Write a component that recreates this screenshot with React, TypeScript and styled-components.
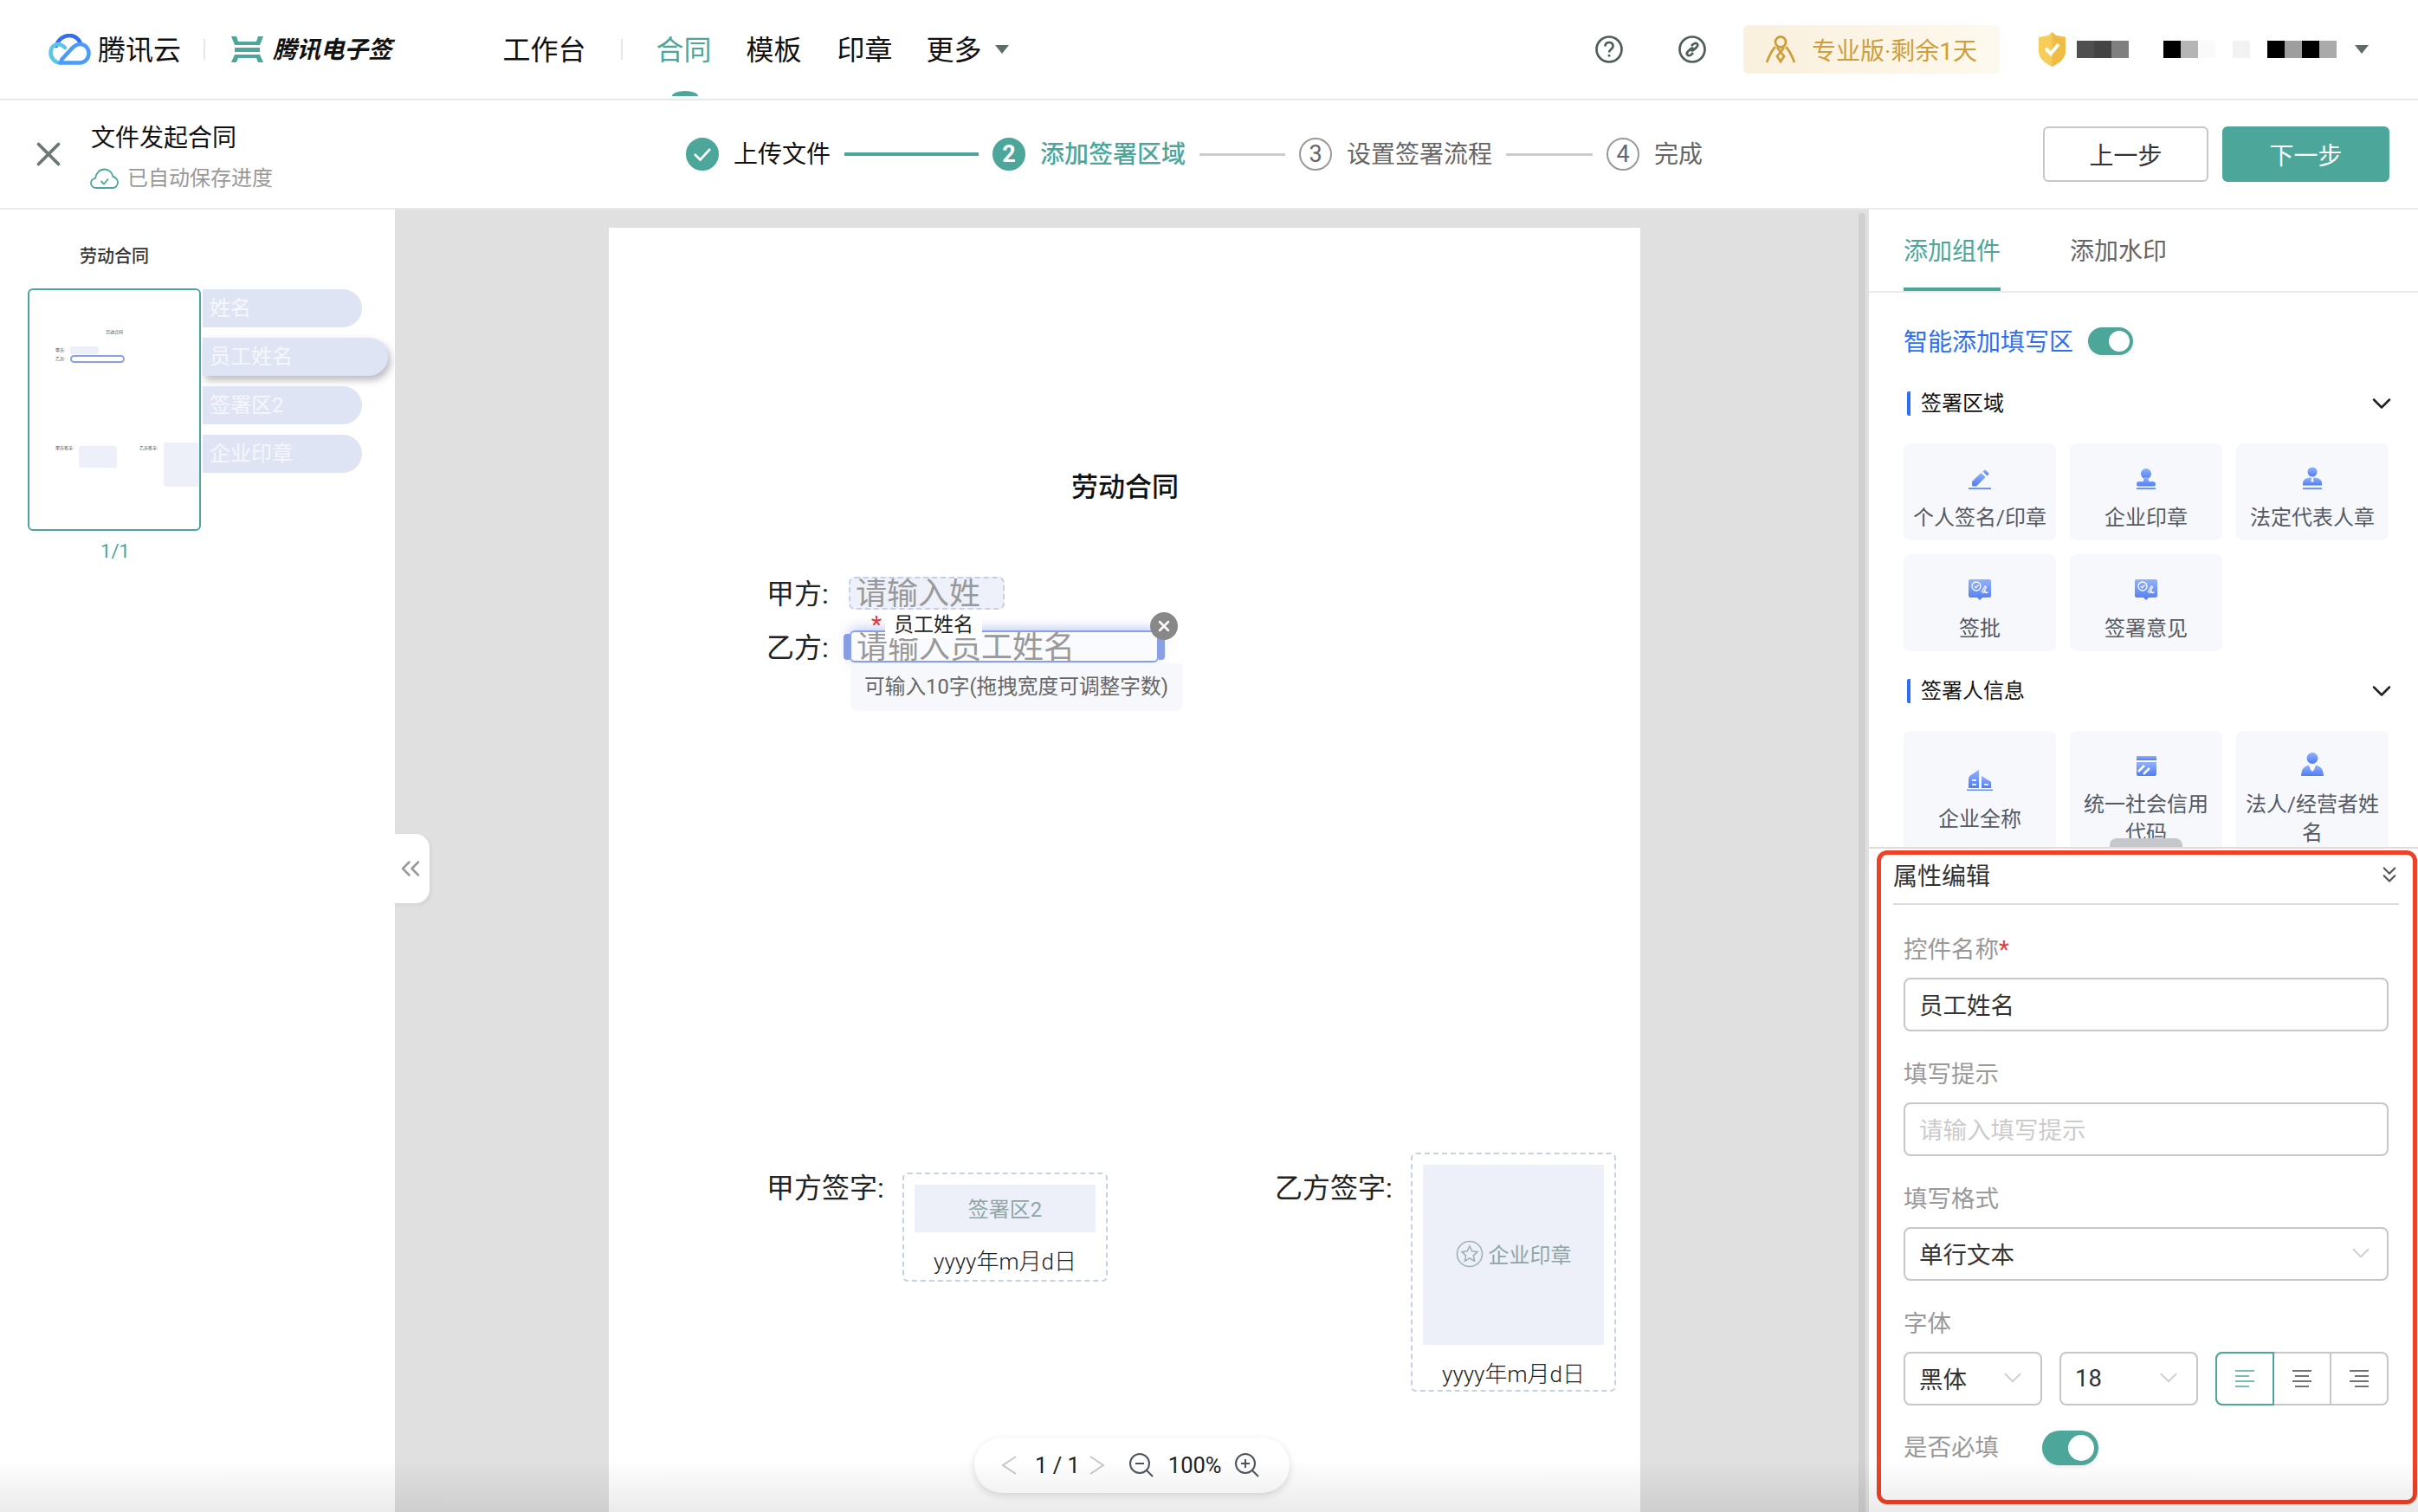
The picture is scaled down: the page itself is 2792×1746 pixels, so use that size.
import { useId } from "react";
import type { ReactNode } from "react";
import styled, { createGlobalStyle } from "styled-components";
import { ChevronDown, ChevronsDown, ChevronsLeft, X } from "lucide-react";

const FONT = `Roboto, "Noto Sans CJK SC", sans-serif`;
const TEAL = "#4ca69a";

const GlobalStyle = createGlobalStyle`
  html, body {
    margin: 0;
    padding: 0;
    overflow: hidden;
    background: #fff;
  }
  * {
    box-sizing: border-box;
  }
`;

const Page = styled.div`
  position: relative;
  width: 100vw;
  height: 100vh;
  display: flex;
  flex-direction: column;
  overflow: hidden;
  font-family: ${FONT};
  color: #222;
`;

const BottomFade = styled.div`
  position: absolute;
  left: 0;
  right: 0;
  bottom: 0;
  height: 62px;
  background: linear-gradient(to bottom, rgba(0, 0, 0, 0), rgba(0, 0, 0, 0.08));
  pointer-events: none;
  z-index: 20;
`;

/* top bar */
const TopBar = styled.header`
  flex: none;
  height: 116px;
  display: flex;
  align-items: center;
  padding: 0 57px 0 56px;
  border-bottom: 2px solid #e6eaea;
`;

const Brand = styled.span`
  margin-left: 8px;
  padding-top: 2px;
  font-size: 32px;
  line-height: 44px;
  color: #111;
`;

const BrandSub = styled.span`
  margin-left: 11px;
  padding-top: 2px;
  font-size: 27.5px;
  line-height: 44px;
  font-weight: 700;
  font-style: italic;
  color: #111;
`;

const VSep = styled.i<{ $left: number; $right: number }>`
  width: 2px;
  height: 24px;
  background: #e6e6e6;
  margin: 0 ${(p) => p.$right}px 0 ${(p) => p.$left}px;
`;

const Nav = styled.nav`
  display: flex;
  align-items: center;
  margin-left: 128px;
`;

const NavItem = styled.a<{ $active?: boolean; $gap?: number }>`
  position: relative;
  margin-left: ${(p) => p.$gap ?? 0}px;
  padding-top: 2px;
  font-size: 32px;
  line-height: 44px;
  color: ${(p) => (p.$active ? TEAL : "#111")};

  ${(p) =>
    p.$active &&
    `&::after {
      content: "";
      position: absolute;
      left: 18px;
      top: 71px;
      width: 30px;
      height: 6px;
      background: ${TEAL};
      border-radius: 50% 50% 0 0 / 100% 100% 0 0;
    }`}
`;

const Caret = styled.i<{ $left: number }>`
  width: 0;
  height: 0;
  margin-left: ${(p) => p.$left}px;
  border-left: 8px solid transparent;
  border-right: 8px solid transparent;
  border-top: 10px solid #5f6b68;
`;

const TopRight = styled.div`
  margin-left: auto;
  display: flex;
  align-items: center;
`;

const RoundIcon = styled.svg<{ $gap: number }>`
  width: 32px;
  height: 32px;
  margin-right: ${(p) => p.$gap}px;
  fill: none;
  stroke: #4e5e59;
  stroke-width: 2.7;
`;

const PlanBadge = styled.div`
  width: 296px;
  height: 56px;
  display: flex;
  align-items: center;
  gap: 18px;
  padding-left: 25px;
  border-radius: 6px;
  background: linear-gradient(to right, #f9f0dd, #fef9ee);
  color: #cf9e38;
  font-size: 28px;
  white-space: nowrap;
`;

const MaskRow = styled.div`
  display: flex;
  margin-left: 13px;
`;

const MaskTile = styled.i<{ $color: string }>`
  width: 20px;
  height: 20px;
  background: ${(p) => p.$color};
`;

/* step bar */
const StepBar = styled.div`
  flex: none;
  height: 126px;
  display: grid;
  grid-template-columns: 747px auto 1fr;
  align-items: center;
  padding: 0 33px 0 45px;
  border-bottom: 2px solid #e6eaea;
`;

const TitleBlock = styled.div`
  display: flex;
  align-items: center;
  gap: 26px;

  > svg {
    margin-left: -12px;
  }
`;

const TitleText = styled.div`
  padding-top: 7px;
`;

const DocTitle = styled.div`
  font-size: 28px;
  line-height: 40px;
  color: #111;
`;

const AutoSave = styled.div`
  display: flex;
  align-items: center;
  gap: 10px;
  margin-top: 9px;
  font-size: 24px;
  line-height: 34px;
  color: #999;
`;

const Stepper = styled.div`
  display: flex;
  align-items: center;
`;

const StepDot = styled.span<{ $on?: boolean }>`
  width: 38px;
  height: 38px;
  display: flex;
  align-items: center;
  justify-content: center;
  border-radius: 50%;
  font-size: 27px;
  font-weight: ${(p) => (p.$on ? 700 : 400)};
  color: ${(p) => (p.$on ? "#fff" : "#666")};
  background: ${(p) => (p.$on ? TEAL : "#fff")};
  border: 2px solid ${(p) => (p.$on ? TEAL : "#999")};
`;

const StepLabel = styled.span<{ $tone: "done" | "active" | "todo" }>`
  margin-left: 17px;
  padding-top: 2px;
  font-size: 28px;
  line-height: 40px;
  white-space: nowrap;
  font-weight: ${(p) => (p.$tone === "active" ? 500 : 400)};
  color: ${(p) => (p.$tone === "active" ? TEAL : p.$tone === "done" ? "#111" : "#666")};
`;

const StepLine = styled.i<{ $on?: boolean; $width: number }>`
  width: ${(p) => p.$width}px;
  height: ${(p) => (p.$on ? 4 : 3)}px;
  margin: 0 16px;
  background: ${(p) => (p.$on ? TEAL : "#ccc")};
`;

const StepActions = styled.div`
  justify-self: end;
  display: flex;
  gap: 16px;
`;

const StepButton = styled.button<{ $primary?: boolean }>`
  width: ${(p) => (p.$primary ? 193 : 191)}px;
  height: 64px;
  border-radius: 6px;
  font-family: ${FONT};
  font-size: 28px;
  color: ${(p) => (p.$primary ? "#fff" : "#333")};
  background: ${(p) => (p.$primary ? TEAL : "#fff")};
  border: 2px solid ${(p) => (p.$primary ? TEAL : "#c5c8c8")};
`;

/* body */
const Body = styled.div`
  flex: 1;
  min-height: 0;
  display: flex;
`;

const LeftPanel = styled.aside`
  flex: none;
  width: 456px;
  padding: 40px 0 0 32px;
  background: #fff;
`;

const ThumbHeading = styled.div`
  width: 200px;
  margin-bottom: 23px;
  text-align: center;
  font-size: 20px;
  line-height: 28px;
  font-weight: 500;
  color: #333;
`;

const ThumbRow = styled.div`
  display: flex;
  gap: 2px;
`;

const Thumb = styled.div`
  position: relative;
  width: 200px;
  height: 280px;
  border: 2px solid ${TEAL};
  border-radius: 6px;
  overflow: hidden;
`;

const ThumbText = styled.span<{ $x: number; $y: number }>`
  position: absolute;
  left: ${(p) => p.$x}px;
  top: ${(p) => p.$y}px;
  font-size: 5px;
  line-height: 7px;
  color: #444;
  white-space: nowrap;
`;

const ThumbBox = styled.i<{ $x: number; $y: number; $w: number; $h: number; $on?: boolean }>`
  position: absolute;
  left: ${(p) => p.$x}px;
  top: ${(p) => p.$y}px;
  width: ${(p) => p.$w}px;
  height: ${(p) => p.$h}px;
  border-radius: ${(p) => (p.$on ? 5 : 2)}px;
  background: ${(p) => (p.$on ? "#fff" : "#edf0f9")};
  border: ${(p) => (p.$on ? "2px solid #8aa0e4" : "none")};
`;

const TagList = styled.div`
  display: flex;
  flex-direction: column;
  gap: 12px;
  padding-top: 1px;
`;

const Tag = styled.div<{ $active?: boolean }>`
  width: ${(p) => (p.$active ? 214 : 184)}px;
  height: 44px;
  padding-left: 8px;
  border-radius: 0 22px 22px 0;
  background: #dfe4f4;
  color: #f6f7fc;
  font-size: 24px;
  line-height: 44px;
  box-shadow: ${(p) => (p.$active ? "3px 5px 8px rgba(60, 60, 80, 0.35)" : "none")};
`;

const PageNo = styled.div`
  width: 202px;
  margin-top: 11px;
  text-align: center;
  font-size: 22px;
  line-height: 26px;
  color: ${TEAL};
`;

const Canvas = styled.main`
  position: relative;
  flex: 1;
  min-width: 0;
  padding: 21px 0 0 247px;
  background: #e0e0e0;
`;

const CollapseTab = styled.div`
  position: absolute;
  left: -4px;
  top: 721px;
  width: 44px;
  height: 80px;
  display: flex;
  align-items: center;
  justify-content: center;
  border-radius: 0 16px 16px 0;
  background: #fff;
  color: #999;
  box-shadow: 2px 2px 4px rgba(0, 0, 0, 0.06);
`;

const ScrollThumb = styled.i`
  position: absolute;
  left: 1690px;
  top: 4px;
  bottom: 0;
  width: 8px;
  border-radius: 4px 4px 0 0;
  background: #d0d0d0;
`;

const Sheet = styled.div`
  position: relative;
  width: 1191px;
  height: 100%;
  background: #fff;
  overflow: hidden;
`;

const SheetTitle = styled.div`
  position: absolute;
  left: 534px;
  top: 277px;
  font-size: 31px;
  line-height: 46px;
  font-weight: 500;
  color: #111;
`;

const SheetLabel = styled.div<{ $x: number; $y: number }>`
  position: absolute;
  left: ${(p) => p.$x}px;
  top: ${(p) => p.$y}px;
  font-size: 32px;
  line-height: 44px;
  color: #222;
  white-space: nowrap;
`;

const DashedField = styled.div`
  position: absolute;
  left: 277px;
  top: 403px;
  width: 180px;
  height: 38px;
  padding-left: 6px;
  border: 2px dashed #c6cfe6;
  border-radius: 7px;
  background: #eef1f9;
  color: #999;
  font-size: 36px;
  line-height: 36px;
  overflow: hidden;
  white-space: nowrap;
`;

const ActiveField = styled.div`
  position: absolute;
  left: 278px;
  top: 465px;
  width: 357px;
  height: 37px;

  &::before,
  &::after {
    content: "";
    position: absolute;
    top: 4px;
    width: 7px;
    height: 30px;
    background: #8aa0e4;
  }
  &::before {
    left: -7px;
    border-radius: 4px 0 0 4px;
  }
  &::after {
    right: -7px;
    border-radius: 0 0 4px 0;
  }
`;

const ActiveInput = styled.div`
  position: relative;
  width: 100%;
  height: 100%;
  padding-left: 6px;
  border: 2px solid #8aa0e4;
  border-radius: 6px;
  background: #fafbfe;
  box-shadow: 0 -2px 14px rgba(120, 145, 225, 0.5);
  color: #999;
  font-size: 36px;
  line-height: 37px;
  overflow: hidden;
  white-space: nowrap;
`;

const FieldStar = styled.span`
  position: absolute;
  left: 25px;
  top: -20px;
  color: #e0393e;
  font-size: 28px;
  line-height: 28px;
`;

const FieldName = styled.span`
  position: absolute;
  left: 41px;
  top: -21px;
  width: 112px;
  height: 30px;
  padding-left: 10px;
  background: #fff;
  color: #222;
  font-size: 23px;
  line-height: 30px;
  white-space: nowrap;
`;

const FieldClose = styled.span`
  position: absolute;
  left: 347px;
  top: -21px;
  width: 32px;
  height: 32px;
  display: flex;
  align-items: center;
  justify-content: center;
  border-radius: 50%;
  background: #888;
  color: #fff;
  z-index: 2;
`;

const FieldHint = styled.div`
  position: absolute;
  left: 1px;
  top: 38px;
  width: 384px;
  height: 55px;
  padding-left: 16px;
  border-radius: 0 0 8px 8px;
  background: #f7f8fb;
  color: #666;
  font-size: 23.7px;
  line-height: 55px;
  white-space: nowrap;
`;

const SignBox = styled.div<{ $x: number; $y: number; $h: number }>`
  position: absolute;
  left: ${(p) => p.$x}px;
  top: ${(p) => p.$y}px;
  width: 237px;
  height: ${(p) => p.$h}px;
  padding: 12px 12px 0;
  border: 2px dashed #c6d2e4;
  border-radius: 6px;
  text-align: center;
`;

const SignArea = styled.div<{ $h: number }>`
  height: ${(p) => p.$h}px;
  display: flex;
  align-items: center;
  justify-content: center;
  gap: 6px;
  padding-bottom: 3px;
  background: #edf0f9;
  color: #8fa5a5;
  font-size: 24px;
`;

const SignDate = styled.div`
  margin-top: 17px;
  font-size: 26px;
  font-weight: 300;
  line-height: 34px;
  color: #222;
`;

const Pager = styled.div`
  position: absolute;
  left: 669px;
  bottom: 22px;
  width: 364px;
  height: 64px;
  display: flex;
  align-items: center;
  padding-left: 31px;
  border-radius: 32px;
  background: #fff;
  box-shadow: 0 3px 10px rgba(0, 0, 0, 0.14);
  font-size: 25.5px;
  color: #222;
  white-space: nowrap;
`;

const PagerCount = styled.span`
  margin: 0 10px 0 20px;
`;

const PagerZoom = styled.span`
  margin: 0 14px 0 16px;
`;

const PagerArrow = styled.svg`
  width: 19px;
  height: 22px;
  fill: none;
  stroke: #c8c8c8;
  stroke-width: 2;
`;

const PagerIcon = styled.svg<{ $left?: number }>`
  width: 30px;
  height: 30px;
  margin-left: ${(p) => p.$left ?? 0}px;
  fill: none;
  stroke: #4c5560;
  stroke-width: 2;
`;

/* right panel */
const RightPanel = styled.aside`
  flex: none;
  width: 634px;
  display: flex;
  flex-direction: column;
  background: #fff;
`;

const Widgets = styled.div`
  position: relative;
  flex: none;
  height: 738px;
  border-bottom: 2px solid #dddddd;
  overflow: hidden;
`;

const DragHandle = styled.i`
  position: absolute;
  left: 278px;
  bottom: 0;
  width: 84px;
  height: 10px;
  border-radius: 8px 8px 0 0;
  background: #c5c7cd;
`;

const Tabs = styled.div`
  height: 96px;
  display: flex;
  gap: 80px;
  padding-left: 40px;
  border-bottom: 2px solid #e6eaea;
`;

const TabItem = styled.div<{ $active?: boolean }>`
  height: 94px;
  font-size: 28px;
  line-height: 98px;
  color: ${(p) => (p.$active ? TEAL : "#666")};
  border-bottom: 4px solid ${(p) => (p.$active ? TEAL : "transparent")};
  white-space: nowrap;
`;

const WidgetBody = styled.div`
  padding: 40px 34px 0 40px;
`;

const SmartRow = styled.div`
  height: 32px;
  display: flex;
  align-items: center;
  gap: 17px;
  font-size: 28px;
  color: #2c6ef5;
`;

const SmartText = styled.span`
  margin-top: -2px;
`;

const Toggle = styled.span<{ $large?: boolean }>`
  position: relative;
  display: block;
  flex: none;
  width: ${(p) => (p.$large ? 65 : 52)}px;
  height: ${(p) => (p.$large ? 40 : 32)}px;
  border-radius: 20px;
  background: ${TEAL};
  box-shadow: 0 2px 5px rgba(0, 0, 0, 0.08);

  &::after {
    content: "";
    position: absolute;
    right: ${(p) => (p.$large ? 5 : 4)}px;
    top: ${(p) => (p.$large ? 5 : 4)}px;
    width: ${(p) => (p.$large ? 30 : 24)}px;
    height: ${(p) => (p.$large ? 30 : 24)}px;
    border-radius: 50%;
    background: #fff;
  }
`;

const SectionHead = styled.div<{ $first?: boolean }>`
  height: 28px;
  margin-top: ${(p) => (p.$first ? 42 : 32)}px;
  display: flex;
  align-items: center;
  justify-content: space-between;
  padding-left: 4px;
  font-size: 24px;
  color: #111;

  svg {
    margin-right: -10px;
  }
`;

const SectionName = styled.span`
  padding-left: 12px;
  line-height: 28px;
  border-left: 4px solid #2c6ef5;
  border-radius: 2px;
`;

const WidgetGrid = styled.div<{ $tall?: boolean }>`
  margin-top: 32px;
  display: grid;
  grid-template-columns: repeat(3, 176px);
  grid-auto-rows: ${(p) => (p.$tall ? 160 : 112)}px;
  gap: 16px;
`;

const WidgetCard = styled.div<{ $tall?: boolean }>`
  display: flex;
  flex-direction: column;
  align-items: center;
  justify-content: center;
  padding: ${(p) => (p.$tall ? "0 8px 9px" : "7px 8px 0")};
  border-radius: 8px;
  background: #f7f8fc;
  color: #555a63;
  font-size: 24px;
  line-height: 33px;
  text-align: center;
`;

const WidgetIconSlot = styled.div`
  height: 36px;
  margin-bottom: 17px;
  display: flex;
  align-items: flex-end;
  justify-content: center;
`;

const Editor = styled.section`
  position: relative;
  flex: 1;
  min-height: 0;
`;

const RedFrame = styled.div`
  position: absolute;
  left: 9px;
  top: 2px;
  right: 1px;
  bottom: 9px;
  border: 5.5px solid #ef4128;
  border-radius: 12px;
  pointer-events: none;
  z-index: 5;
`;

const EditorHead = styled.div`
  height: 65px;
  margin: 0 22px 0 28px;
  padding: 0 0 3px;
  display: flex;
  align-items: center;
  justify-content: space-between;
  border-bottom: 2px solid #ddd;
  font-size: 28px;
  color: #333;

  svg {
    margin-right: -4px;
  }
`;

const EditorForm = styled.div`
  display: flex;
  flex-direction: column;
  gap: 32px;
  padding: 34px 34px 0 40px;
`;

const FieldLabel = styled.div`
  margin-bottom: 14px;
  font-size: 27.5px;
  line-height: 36px;
  color: #999;

  em {
    color: #e0393e;
    font-style: normal;
  }
`;

const TextBox = styled.div<{ $placeholder?: boolean }>`
  height: 62px;
  display: flex;
  align-items: center;
  justify-content: space-between;
  padding: 0 13px 2px 16px;
  border: 2px solid #c5c8c8;
  border-radius: 8px;
  font-size: 27.5px;
  color: ${(p) => (p.$placeholder ? "#ccc" : "#333")};
  background: #fff;
`;

const FontRow = styled.div`
  display: flex;
  align-items: stretch;
  gap: 20px;
`;

const SmallSelect = styled(TextBox)`
  width: 160px;
  padding-right: 15px;
`;

const AlignGroup = styled.div`
  width: 200px;
  height: 62px;
  display: flex;
  border: 2px solid #c5c8c8;
  border-radius: 8px;
`;

const AlignButton = styled.div<{ $on?: boolean }>`
  flex: 1;
  display: flex;
  align-items: center;
  justify-content: center;
  margin: ${(p) => (p.$on ? "-2px 0 -2px -2px" : "0")};
  border: ${(p) => (p.$on ? `2px solid ${TEAL}` : "none")};
  border-radius: ${(p) => (p.$on ? "8px 0 0 8px" : "0")};
  border-left: ${(p) => (p.$on ? `2px solid ${TEAL}` : "2px solid #c5c8c8")};
  color: ${(p) => (p.$on ? TEAL : "#444")};

  &:nth-child(2) {
    border-left: none;
  }
`;

const RequiredRow = styled.div`
  display: flex;
  align-items: center;
  height: 40px;
  margin-top: -3px;
`;

const RequiredLabel = styled(FieldLabel)`
  width: 160px;
  margin-bottom: 0;
`;

const SelectChevron = () => <ChevronDown size={34} color="#d0d0d0" strokeWidth={1.4} />;

const BlueIcon = ({ w, h, children }: { w: number; h: number; children: ReactNode }) => {
  const id = useId();
  return (
    <svg width={w} height={h} viewBox={`0 0 ${w} ${h}`} style={{ fill: `url(#${id})` }}>
      <defs>
        <linearGradient id={id} x1="0" y1="0" x2="0" y2="1">
          <stop offset="0" stopColor="#93b2fb" />
          <stop offset="1" stopColor="#4f7cf4" />
        </linearGradient>
      </defs>
      {children}
    </svg>
  );
};

const PenIcon = () => (
  <BlueIcon w={26} h={24}>
    <path d="M4 15 14.5 5l5 5L9 20.5H5.5Q4 20.5 4 19Z" />
    <path d="M16.5 3.5 18 2q1-1 2 0l3 3q1 1 0 2l-1.5 1.5Z" />
    <rect x="0" y="22" width="26" height="2" />
  </BlueIcon>
);

const StampIcon = () => (
  <BlueIcon w={22} h={24}>
    <circle cx="11" cy="6" r="6" />
    <path d="M8.5 10h5l.5 5h5q3 0 3 3 0 2.600-3 2.600H3Q0 20.600 0 18q0-3 3-3h5Z" />
    <rect x="0" y="22" width="22" height="2" />
  </BlueIcon>
);

const LegalIcon = () => (
  <BlueIcon w={22} h={26}>
    <circle cx="11" cy="6" r="5.500" />
    <path d="M8 12.500h2l-.5 5h3L12 12.500h2q8 .5 8 7v2H0v-2q0-6.500 8-7Z" />
    <rect x="0" y="24" width="22" height="2" />
  </BlueIcon>
);

const ApproveIcon = () => (
  <BlueIcon w={26} h={24}>
    <path d="M2 0h22q2 0 2 2v17q0 2-2 2h-8l-3 3-3-3H2q-2 0-2-2V2q0-2 2-2Z" />
    <circle cx="9" cy="8" r="5" fill="none" stroke="#fff" strokeWidth="1.300" />
    <path d="m6.800 8 1.700 1.700 3-3.200M15 15l4-7 1.500 1-3 6q3-2 2 .5 1.500.5 3-1" fill="none" stroke="#fff" strokeWidth="1.300" />
  </BlueIcon>
);

const BuildingIcon = () => (
  <BlueIcon w={30} h={24}>
    <path d="M2 21V10q0-2 2-3.500L14 0v21Z" />
    <path d="M17 21V7l11 7q0 0 0 2v5Z" />
    <rect x="0" y="22.300" width="30" height="1.700" />
    <path d="M6 11h5v2H6zM6 16h5v2H6zM20 16h5v2h-5z" fill="#eaf0ff" />
  </BlueIcon>
);

const CreditIcon = () => (
  <BlueIcon w={23} h={23}>
    <path d="M1 0h21q1 0 1 1v4H0V1q0-1 1-1Z" />
    <path d="M0 7h23v14q0 2-2 2H2q-2 0-2-2Z" />
    <path d="m2 18 7-7M8 21l7-7" stroke="#fff" strokeWidth="2.500" fill="none" />
  </BlueIcon>
);

const PersonTieIcon = () => (
  <BlueIcon w={26} h={27}>
    <circle cx="13" cy="6.500" r="6.500" />
    <path d="M9 14.500 11 20l2 2 2-2 2-5.500q9 2 9 12.500H0Q0 16.500 9 14.500Z" />
    <path d="M13 14v6" stroke="#fff" strokeWidth="2" />
  </BlueIcon>
);

const AlignIcon = ({ mode }: { mode: "left" | "center" | "right" }) => {
  const x = mode === "left" ? 0 : mode === "center" ? 3 : 6;
  return (
    <svg width="22" height="20" viewBox="0 0 22 20" fill="none" stroke="currentColor" strokeWidth="1.600">
      <path d={`M0 1h22M${x} 7h16M0 13h22M${x} 19h16`} />
    </svg>
  );
};

const maskColors = [
  "#4f4f4f", "#444", "#7f7f7f", "#fff", "#fff", "#000", "#b5b5b5", "#fafafa",
  "#fff", "#f2f2f2", "#fff", "#000", "#9e9e9e", "#000", "#aaa",
];

export default function App() {
  return (
    <Page>
      <GlobalStyle />
      <TopBar>
        <svg width="49" height="36" viewBox="0 0 49 36" fill="none" strokeWidth="4.500" strokeLinecap="round">
          <path d="M9 14C11 6 18 2 24 2c6 0 10 3 12.500 8" stroke="#2f6ff0" />
          <path d="M19 16C15 12 11 11.500 8.500 12.500 4.500 14 2.500 18 2.500 22c0 6 5 11.500 11 11.500" stroke="#5ac6e6" />
          <path d="M13.500 33.500H36c6 0 10.500-5 10.500-11 0-6-4.500-10.500-10-10.500-5 0-8 3-11 6.500L15 30" stroke="#4a9cf7" />
        </svg>
        <Brand>腾讯云</Brand>
        <VSep $left={26} $right={30} />
        <svg width="37" height="30" viewBox="0 0 37 30" fill={TEAL}>
          <path d="M0 0h6l2 6h21l2-6h6l-4 10H4Z" />
          <rect x="4" y="13" width="29" height="5" />
          <path d="M4 21h29l4 9h-6l-2-5H8l-2 5H0Z" />
        </svg>
        <BrandSub>腾讯电子签</BrandSub>
        <Nav>
          <NavItem>工作台</NavItem>
          <VSep $left={40} $right={39} />
          <NavItem $active>合同</NavItem>
          <NavItem $gap={40}>模板</NavItem>
          <NavItem $gap={41}>印章</NavItem>
          <NavItem $gap={39}>更多</NavItem>
          <Caret $left={15} />
        </Nav>
        <TopRight>
          <RoundIcon $gap={64} viewBox="0 0 32 32">
            <circle cx="16" cy="16" r="14.500" />
            <path d="M11.500 12.500c0-3 2-4.500 4.500-4.500s4.500 1.500 4.500 4.200c0 3.800-4.500 3.800-4.500 7.300" />
            <path d="M16 22v2.500" />
          </RoundIcon>
          <RoundIcon $gap={43} viewBox="0 0 32 32">
            <circle cx="16" cy="16" r="14.500" />
            <path d="M15 12l2-2c2-1.500 3.500-1.500 4.500-.5s1 2.500-.5 4l-3 3c-1.300 1-2.500 1-3.500 0" />
            <path d="M17 20l-2 2c-2 1.500-3.500 1.500-4.500.5s-1-2.500.5-4l3-3c1.300-1 2.500-1 3.500 0" />
          </RoundIcon>
          <PlanBadge>
            <svg width="36" height="32" viewBox="0 0 36 32" fill="none" stroke="#cf9e38" strokeWidth="2.800">
              <circle cx="18" cy="7.500" r="6" />
              <path d="M12 13C8 17 5 23 2 31M24 13c4 4 7 10 10 18M14 14l8 10-4 6-4-6 8-10" />
            </svg>
            专业版·剩余1天
          </PlanBadge>
          <svg width="31" height="40" viewBox="0 0 31 40" style={{ marginLeft: 45 }}>
            <path d="M15.500 0 20 4l11 2v16c0 9-8 14-15.500 18C8 36 0 31 0 22V6l11-2Z" fill="#f6cd58" />
            <path d="M15.500 0 20 4l11 2v16c0 9-8 14-15.500 18Z" fill="#efbd45" />
            <path d="m8 19 6 6 9-11" fill="none" stroke="#fff" strokeWidth="4" />
          </svg>
          <MaskRow>
            {maskColors.map((c, i) => (
              <MaskTile key={i} $color={c} />
            ))}
          </MaskRow>
          <Caret $left={21} />
        </TopRight>
      </TopBar>

      <StepBar>
        <TitleBlock>
          <X size={46} color="#6b7873" strokeWidth={2} />
          <TitleText>
            <DocTitle>文件发起合同</DocTitle>
            <AutoSave>
              <svg width="33" height="24" viewBox="0 0 33 24" fill="none" stroke={TEAL} strokeWidth="1.800" style={{ marginLeft: -1 }}>
                <path d="M26 23H7c-3.500 0-6-2.500-6-5.500 0-3 2.200-5.300 5-5.700C7 6 11 1.500 16.500 1.500c5 0 9 3.500 10 8.500 3 .5 5.500 3.500 5.500 6.500 0 3.500-2.500 6.500-6 6.500Z" />
                <path d="m12.500 15 3.500 3.500 5-6" />
              </svg>
              已自动保存进度
            </AutoSave>
          </TitleText>
        </TitleBlock>
        <Stepper>
          <StepDot $on>
            <svg width="22" height="18" viewBox="0 0 22 18" fill="none" stroke="#fff" strokeWidth="2.600">
              <path d="m2 9 6.500 6.500L20 3" />
            </svg>
          </StepDot>
          <StepLabel $tone="done">上传文件</StepLabel>
          <StepLine $on $width={155} />
          <StepDot $on>2</StepDot>
          <StepLabel $tone="active">添加签署区域</StepLabel>
          <StepLine $width={99} />
          <StepDot>3</StepDot>
          <StepLabel $tone="todo">设置签署流程</StepLabel>
          <StepLine $width={100} />
          <StepDot>4</StepDot>
          <StepLabel $tone="todo">完成</StepLabel>
        </Stepper>
        <StepActions>
          <StepButton>上一步</StepButton>
          <StepButton $primary>下一步</StepButton>
        </StepActions>
      </StepBar>

      <Body>
        <LeftPanel>
          <ThumbHeading>劳动合同</ThumbHeading>
          <ThumbRow>
            <Thumb>
              <ThumbText $x={88} $y={45}>劳动合同</ThumbText>
              <ThumbText $x={30} $y={66}>甲方:</ThumbText>
              <ThumbBox $x={47} $y={65} $w={33} $h={9} />
              <ThumbText $x={30} $y={76}>乙方:</ThumbText>
              <ThumbBox $x={47} $y={75} $w={63} $h={9} $on />
              <ThumbText $x={30} $y={179}>甲方签字:</ThumbText>
              <ThumbBox $x={57} $y={180} $w={44} $h={25} />
              <ThumbText $x={127} $y={179}>乙方签字:</ThumbText>
              <ThumbBox $x={155} $y={176} $w={41} $h={51} />
            </Thumb>
            <TagList>
              <Tag>姓名</Tag>
              <Tag $active>员工姓名</Tag>
              <Tag>签署区2</Tag>
              <Tag>企业印章</Tag>
            </TagList>
          </ThumbRow>
          <PageNo>1/1</PageNo>
        </LeftPanel>

        <Canvas>
          <CollapseTab>
            <ChevronsLeft size={36} strokeWidth={1.7} />
          </CollapseTab>
          <ScrollThumb />
          <Sheet>
            <SheetTitle>劳动合同</SheetTitle>
            <SheetLabel $x={182} $y={401}>甲方:</SheetLabel>
            <DashedField>请输入姓</DashedField>
            <SheetLabel $x={182} $y={463}>乙方:</SheetLabel>
            <ActiveField>
              <ActiveInput>请输入员工姓名</ActiveInput>
              <FieldStar>*</FieldStar>
              <FieldName>员工姓名</FieldName>
              <FieldClose>
                <X size={20} strokeWidth={3} />
              </FieldClose>
              <FieldHint>可输入10字(拖拽宽度可调整字数)</FieldHint>
            </ActiveField>
            <SheetLabel $x={182} $y={1087}>甲方签字:</SheetLabel>
            <SignBox $x={339} $y={1091} $h={126}>
              <SignArea $h={55}>签署区2</SignArea>
              <SignDate>yyyy年m月d日</SignDate>
            </SignBox>
            <SheetLabel $x={769} $y={1087}>乙方签字:</SheetLabel>
            <SignBox $x={926} $y={1068} $h={276}>
              <SignArea $h={208}>
                <svg width="32" height="32" viewBox="0 0 32 32" fill="none" stroke="#9fb3b5" strokeWidth="1.600">
                  <circle cx="16" cy="16" r="14.500" />
                  <path d="m16 7 2.700 5.800 6.300.8-4.600 4.300 1.200 6.200-5.600-3.100-5.600 3.100 1.200-6.200L7 13.600l6.300-.8Z" />
                </svg>
                企业印章
              </SignArea>
              <SignDate>yyyy年m月d日</SignDate>
            </SignBox>
          </Sheet>
          <Pager>
            <PagerArrow viewBox="0 0 19 22">
              <path d="M17 1 2 11l15 10" />
            </PagerArrow>
            <PagerCount>1 / 1</PagerCount>
            <PagerArrow viewBox="0 0 19 22">
              <path d="m2 1 15 10L2 21" />
            </PagerArrow>
            <PagerIcon $left={27} viewBox="0 0 30 30">
              <circle cx="13" cy="13" r="11" />
              <path d="M8 13h10M21 21l7 7" />
            </PagerIcon>
            <PagerZoom>100%</PagerZoom>
            <PagerIcon viewBox="0 0 30 30">
              <circle cx="13" cy="13" r="11" />
              <path d="M8 13h10M13 8v10M21 21l7 7" />
            </PagerIcon>
          </Pager>
        </Canvas>

        <RightPanel>
          <Widgets>
            <Tabs>
              <TabItem $active>添加组件</TabItem>
              <TabItem>添加水印</TabItem>
            </Tabs>
            <WidgetBody>
              <SmartRow>
                <SmartText>智能添加填写区</SmartText>
                <Toggle />
              </SmartRow>
              <SectionHead $first>
                <SectionName>签署区域</SectionName>
                <ChevronDown size={36} color="#222" strokeWidth={1.7} />
              </SectionHead>
              <WidgetGrid>
                <WidgetCard>
                  <WidgetIconSlot><PenIcon /></WidgetIconSlot>
                  个人签名/印章
                </WidgetCard>
                <WidgetCard>
                  <WidgetIconSlot><StampIcon /></WidgetIconSlot>
                  企业印章
                </WidgetCard>
                <WidgetCard>
                  <WidgetIconSlot><LegalIcon /></WidgetIconSlot>
                  法定代表人章
                </WidgetCard>
                <WidgetCard>
                  <WidgetIconSlot><ApproveIcon /></WidgetIconSlot>
                  签批
                </WidgetCard>
                <WidgetCard>
                  <WidgetIconSlot><ApproveIcon /></WidgetIconSlot>
                  签署意见
                </WidgetCard>
              </WidgetGrid>
              <SectionHead>
                <SectionName>签署人信息</SectionName>
                <ChevronDown size={36} color="#222" strokeWidth={1.7} />
              </SectionHead>
              <WidgetGrid $tall>
                <WidgetCard $tall>
                  <WidgetIconSlot><BuildingIcon /></WidgetIconSlot>
                  企业全称
                </WidgetCard>
                <WidgetCard $tall>
                  <WidgetIconSlot><CreditIcon /></WidgetIconSlot>
                  统一社会信用代码
                </WidgetCard>
                <WidgetCard $tall>
                  <WidgetIconSlot><PersonTieIcon /></WidgetIconSlot>
                  法人/经营者姓名
                </WidgetCard>
              </WidgetGrid>
            </WidgetBody>
            <DragHandle />
          </Widgets>

          <Editor>
            <RedFrame />
            <EditorHead>
              属性编辑
              <ChevronsDown size={30} color="#555" strokeWidth={1.7} />
            </EditorHead>
            <EditorForm>
              <div>
                <FieldLabel>控件名称<em>*</em></FieldLabel>
                <TextBox>员工姓名</TextBox>
              </div>
              <div>
                <FieldLabel>填写提示</FieldLabel>
                <TextBox $placeholder>请输入填写提示</TextBox>
              </div>
              <div>
                <FieldLabel>填写格式</FieldLabel>
                <TextBox>
                  单行文本
                  <SelectChevron />
                </TextBox>
              </div>
              <div>
                <FieldLabel>字体</FieldLabel>
                <FontRow>
                  <SmallSelect>
                    黑体
                    <SelectChevron />
                  </SmallSelect>
                  <SmallSelect>
                    18
                    <SelectChevron />
                  </SmallSelect>
                  <AlignGroup>
                    <AlignButton $on><AlignIcon mode="left" /></AlignButton>
                    <AlignButton><AlignIcon mode="center" /></AlignButton>
                    <AlignButton><AlignIcon mode="right" /></AlignButton>
                  </AlignGroup>
                </FontRow>
              </div>
              <RequiredRow>
                <RequiredLabel>是否必填</RequiredLabel>
                <Toggle $large />
              </RequiredRow>
            </EditorForm>
          </Editor>
        </RightPanel>
      </Body>
      <BottomFade />
    </Page>
  );
}
